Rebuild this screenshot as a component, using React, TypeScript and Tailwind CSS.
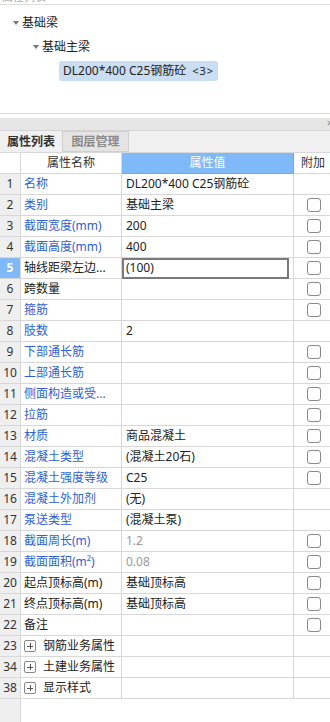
import React from 'react';

type Row = {
  n: number;
  name: string;
  blue?: boolean;
  value?: string;
  gray?: boolean;
  cb?: boolean;
  group?: boolean;
  sel?: boolean;
};

const rows: Row[] = [
  { n: 1, name: '名称', blue: true, value: 'DL200*400 C25钢筋砼' },
  { n: 2, name: '类别', blue: true, value: '基础主梁', cb: true },
  { n: 3, name: '截面宽度(mm)', blue: true, value: '200', cb: true },
  { n: 4, name: '截面高度(mm)', blue: true, value: '400', cb: true },
  { n: 5, name: '轴线距梁左边...', value: '(100)', cb: true, sel: true },
  { n: 6, name: '跨数量', value: '', cb: true },
  { n: 7, name: '箍筋', blue: true, value: '', cb: true },
  { n: 8, name: '肢数', blue: true, value: '2' },
  { n: 9, name: '下部通长筋', blue: true, value: '', cb: true },
  { n: 10, name: '上部通长筋', blue: true, value: '', cb: true },
  { n: 11, name: '侧面构造或受...', blue: true, value: '', cb: true },
  { n: 12, name: '拉筋', blue: true, value: '', cb: true },
  { n: 13, name: '材质', blue: true, value: '商品混凝土', cb: true },
  { n: 14, name: '混凝土类型', blue: true, value: '(混凝土20石)', cb: true },
  { n: 15, name: '混凝土强度等级', blue: true, value: 'C25', cb: true },
  { n: 16, name: '混凝土外加剂', blue: true, value: '(无)' },
  { n: 17, name: '泵送类型', blue: true, value: '(混凝土泵)' },
  { n: 18, name: '截面周长(m)', blue: true, value: '1.2', gray: true, cb: true },
  { n: 19, name: '截面面积(m²)', blue: true, value: '0.08', gray: true, cb: true },
  { n: 20, name: '起点顶标高(m)', value: '基础顶标高', cb: true },
  { n: 21, name: '终点顶标高(m)', value: '基础顶标高', cb: true },
  { n: 22, name: '备注', value: '', cb: true },
  { n: 23, name: '钢筋业务属性', group: true },
  { n: 34, name: '土建业务属性', group: true },
  { n: 38, name: '显示样式', group: true },
];

function Checkbox() {
  return <div className="w-[14px] h-[14px] rounded-[3px] border border-[#8a8a8a] bg-white" />;
}

function PlusBox() {
  return (
    <div className="w-[12px] h-[12px] rounded-[2px] border border-[#8a8a8a] flex items-center justify-center relative">
      <div className="absolute w-[6px] h-[1px] bg-[#555]" />
      <div className="absolute w-[1px] h-[6px] bg-[#555]" />
    </div>
  );
}

function Tri() {
  return (
    <span className="inline-block w-0 h-0 border-l-[3px] border-r-[3px] border-t-[4px] border-l-transparent border-r-transparent border-t-[#777] mr-[3px]" />
  );
}

export default function App() {
  return (
    <div
      className="w-[330px] h-[722px] overflow-hidden bg-white text-[12px] text-[#222] flex flex-col"
      style={{ fontFamily: '"Noto Sans", "Noto Sans CJK SC", sans-serif' }}
    >
      {/* cut-off top title */}
      <div className="h-[4px] overflow-hidden relative border-b border-[#dedede] box-content">
        <div className="absolute left-[2px] top-[-9px] leading-[12px] text-[#aaa] text-[11px]">属性列表</div>
      </div>

      {/* tree */}
      <div className="h-[108px] pt-[6px] flex flex-col">
        <div className="h-[24px] flex items-center pl-[13px]">
          <Tri />
          <span>基础梁</span>
        </div>
        <div className="h-[24px] flex items-center pl-[33px]">
          <Tri />
          <span>基础主梁</span>
        </div>
        <div className="h-[24px] flex items-center pl-[59px]">
          <div className="h-[20px] w-[159px] rounded-[3px] bg-[#c9ddf3] flex items-center pl-[4px] whitespace-nowrap">
            DL200*400 C25钢筋砼 <span className="ml-[6px] text-[11px] tracking-[1px]">&lt;3&gt;</span>
          </div>
        </div>
      </div>

      <div className="h-[1px] bg-[#d6d6d6]" />
      <div className="h-[4px]" />

      {/* gray bar */}
      <div className="h-[12px] bg-[#e6e6e6] border-b border-[#d4d4d4] box-content relative overflow-hidden">
        <span className="absolute right-[-3px] top-[-3px] text-[11px] text-[#888]">×</span>
      </div>

      {/* tabs */}
      <div className="h-[22px] bg-[#f0f0f0] flex items-stretch border-b border-[#d8d8d8]">
        <div className="w-[62px] flex items-center justify-center font-bold text-[#333]">属性列表</div>
        <div className="w-[67px] flex items-center justify-center bg-[#e4e4e4] border border-[#cfcfcf] text-[#8a8a8a] font-bold">
          图层管理
        </div>
      </div>

      {/* table */}
      <div className="flex-1 relative">
        <div className="absolute left-0 top-0 bottom-0 w-[21px] bg-[#efefef] border-r border-[#d8d8d8]" />
        <div className="relative grid grid-cols-[21px_101px_172px_1fr]">
          {/* header */}
          <div className="h-[21px] bg-white border-r border-b border-[#d8d8d8]" />
          <div className="h-[21px] bg-white border-r border-b border-[#d8d8d8] flex items-center justify-center text-[#333]">
            属性名称
          </div>
          <div className="h-[21px] bg-[#80b9f7] border-r border-b border-[#6ea9ec] flex items-center justify-center text-white">
            属性值
          </div>
          <div className="h-[21px] bg-white border-b border-[#d8d8d8] flex items-center pl-[7px] text-[#333]">附加</div>

          {rows.map((r) => (
            <React.Fragment key={r.n}>
              <div
                className={
                  'h-[21px] border-r border-b border-[#d8d8d8] flex items-center justify-center ' +
                  (r.sel ? 'bg-[#80b9f7] text-white font-bold' : 'bg-[#efefef] text-[#333]')
                }
              >
                {r.n}
              </div>
              <div
                className={
                  'h-[21px] border-r border-b border-[#d8d8d8] bg-white flex items-center pl-[3px] whitespace-nowrap overflow-hidden ' +
                  (r.blue ? 'text-[#2f5fd6]' : 'text-[#222]')
                }
              >
                {r.group ? (
                  <>
                    <PlusBox />
                    <span className="ml-[7px]">{r.name}</span>
                  </>
                ) : (
                  r.name
                )}
              </div>
              <div
                className={
                  'h-[21px] border-r border-b border-[#d8d8d8] bg-white flex items-center whitespace-nowrap pl-[4px] ' +
                  (r.gray ? 'text-[#9a9a9a]' : 'text-[#222]')
                }
              >
                {r.sel ? (
                  <div className="h-[21px] w-full -ml-[4px] border-2 border-[#7a7a7a] flex items-center pl-[2px]">
                    {r.value}
                  </div>
                ) : (
                  r.value
                )}
              </div>
              <div className="h-[21px] border-b border-[#d8d8d8] bg-white flex items-center pl-[13px]">
                {r.cb ? <Checkbox /> : null}
              </div>
            </React.Fragment>
          ))}
        </div>
      </div>
    </div>
  );
}
